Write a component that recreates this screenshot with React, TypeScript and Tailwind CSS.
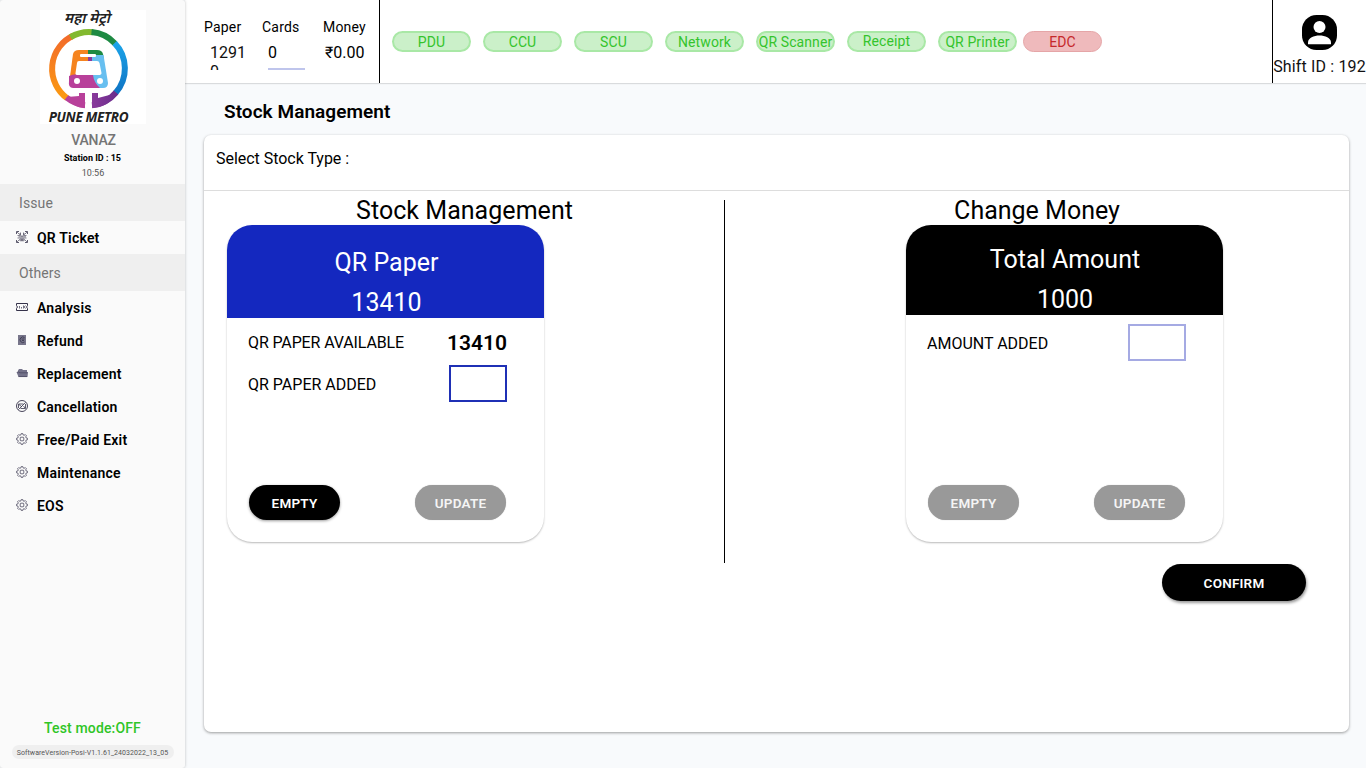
import type { ReactNode } from "react";

const ink = "#35324a";

function MetroLogo() {
  return (
    <div className="mt-[10px] ml-px flex h-[114px] w-[106px] flex-col items-center bg-white">
      <div className="h-[18px] w-[94px] self-start text-center font-['Noto_Sans_Devanagari','Noto_Sans',sans-serif] text-[14.5px] leading-[20px] font-semibold whitespace-nowrap text-[#222] italic">
        महा मेट्रो
      </div>
      <svg width="106" height="82" viewBox="40 28 106 82" className="shrink-0">
        <defs>
          <linearGradient id="org" x1="0" y1="0" x2="0" y2="1">
            <stop offset="0" stopColor="#f26b2a" />
            <stop offset="1" stopColor="#fb9a12" />
          </linearGradient>
          <linearGradient id="blu" x1="0" y1="0" x2="0" y2="1">
            <stop offset="0" stopColor="#1ba3e8" />
            <stop offset="1" stopColor="#0f74c4" />
          </linearGradient>
          <linearGradient id="prp" x1="0" y1="0" x2="1" y2="0">
            <stop offset="0" stopColor="#8a3a9c" />
            <stop offset="1" stopColor="#6a2c8c" />
          </linearGradient>
        </defs>
        <g fill="none" strokeWidth="6">
          <path d="M67 98.200A36.500 36.500 0 0 1 73 35.800" stroke="url(#org)" />
          <path d="M70.500 37.200A36.500 36.500 0 0 1 93 32.300" stroke="#82b92f" />
          <path d="M91.500 32.100A36.500 36.500 0 0 1 115 43.500" stroke="#1e8a43" />
          <path d="M114.600 43.200A36.500 36.500 0 0 1 115.500 93" stroke="url(#blu)" />
          <path d="M116 92.500A36.500 36.500 0 0 1 92 105.300" stroke="url(#prp)" />
          <path d="M66.500 97.500A36.500 36.500 0 0 0 85 105.300" stroke="#b8409a" />
        </g>
        <path d="M67 97l12-1v-3h6v15q-11-1-18-8z" fill="#b8409a" />
        <path d="M92 93h6v5l19-5q-8 14-25 15z" fill="url(#prp)" />
        <path d="M79 50h10v34H69l4-30q1-4 6-4z" fill="#f5841f" />
        <path d="M88 50h9q5 0 6 4l1 6H88z" fill="#1e8a43" />
        <path d="M92 55h11.500l4.500 28q0 5-5 5H92z" fill="#67bff0" />
        <path d="M69 76q6-3 12-1h12q1 8 7 13H73q-5 0-4-7z" fill="#b8409a" />
        <rect x="88" y="57" width="4" height="5" fill="#8a3a9c" />
        <path d="M79 61h18q2 0 2.500 2l2 10q0 2-3 2H78q-3 0-2.500-2l1.500-10q0-2 2-2z" fill="#fff" />
        <rect x="80" y="54" width="16" height="3" rx="1" fill="#fff" />
        <circle cx="77" cy="81" r="3" fill="#fff" />
        <circle cx="100" cy="81" r="3" fill="#fff" />
      </svg>
      <div className="w-[97px] self-start text-center font-['Open_Sans',sans-serif] text-[13.5px] leading-[15px] font-bold tracking-[-0.35px] whitespace-nowrap text-[#222] italic">
        PUNE METRO
      </div>
    </div>
  );
}

function QrIcon() {
  return (
    <svg width="12" height="12" viewBox="0 0 12 12" fill="none" stroke={ink} strokeWidth="0.8">
      <path d="M.5 3V.5H3M9 .5h2.500V3M.5 9v2.500H3M9 11.500h2.500V9" />
      <path
        d="M1 1l2.500 2.500M11 1L8.500 3.500M1 11l2.500-2.500M8.500 8.500L11 11M4.500 1.500v3h-3M7.500 1.500v3h3M1.500 7h3.500v3.500M10.500 7H7v3.500M2.500 5.800h7.500M6 4v6M3 3h2M7 3h2M3 9h6"
        strokeWidth="0.6"
      />
    </svg>
  );
}

function TicketIcon() {
  return (
    <svg width="12" height="12" viewBox="0 0 12 12" fill="none" stroke={ink} strokeWidth="1">
      <path d="M.5 2.500h11v2l-1 1.500 1 1.500v2H.5v-2l1-1.500-1-1.500z" />
      <path d="M3.500 5v2.500M5.500 6v1.500M7.500 4.500v3M9.500 4.500L8.200 6l1.300 1.500" strokeWidth="0.7" />
    </svg>
  );
}

function RefundIcon() {
  return (
    <svg width="12" height="12" viewBox="0 0 12 12">
      <rect x="2" y="1" width="8" height="10" fill="#77758a" />
      <path d="M8.500 3.500A2.800 2.800 0 1 0 8.500 8M5.500 5h3M6 6.500h2" fill="none" stroke={ink} strokeWidth="0.8" />
    </svg>
  );
}

function FolderIcon() {
  return (
    <svg width="12" height="12" viewBox="0 0 12 12">
      <path d="M2 5V3.500l1-1.500h3l1 1h4V5h1l-.5 5H2.500L.5 5z" fill="#74728a" />
      <path d="M1 5h2l.8.800h7.500M2.500 9.600h8.500" stroke={ink} strokeWidth="0.5" fill="none" />
    </svg>
  );
}

function CancelIcon() {
  return (
    <svg width="12" height="12" viewBox="0 0 12 12" fill="none" stroke={ink} strokeWidth="0.9">
      <circle cx="6" cy="6" r="5.500" />
      <path d="M2.500 9.500l7-7M2.500 4h5M2.500 4v4M4.500 8.500h5v-4.500M3 4.500l3 2.500M7.500 6l1.500 2" strokeWidth="0.8" />
    </svg>
  );
}

function GearIcon() {
  return (
    <svg width="12" height="12" viewBox="0 0 12 12" fill="none" stroke={ink} strokeWidth="0.7">
      <path d="M5.200.6h1.600l.3 1.300 1 .4 1.200-.7 1.100 1.100-.7 1.200.4 1 1.300.3v1.600l-1.300.3-.4 1 .7 1.200-1.100 1.100-1.200-.7-1 .4-.3 1.300H5.200l-.3-1.300-1-.4-1.200.7-1.100-1.100.7-1.200-.4-1L.6 6.800V5.200l1.300-.3.4-1-.7-1.200 1.100-1.100 1.200.7 1-.4z" />
      <rect x="4.200" y="4.200" width="3.600" height="3.600" rx="0.800" />
    </svg>
  );
}

function Section({ children }: { children: ReactNode }) {
  return (
    <div className="flex h-[37px] w-full shrink-0 items-center bg-[#efefef] pl-[19px] text-[14px] leading-[18px] tracking-[0.1px] text-[#757575]">
      {children}
    </div>
  );
}

function NavItem({ icon, label }: { icon: ReactNode; label: string }) {
  return (
    <div className="flex h-[33px] w-full shrink-0 items-center gap-[9px] pl-4">
      <span className="-mt-[1px]">{icon}</span>
      <span className="text-[14px] leading-[18px] font-semibold tracking-[0.2px] text-black">{label}</span>
    </div>
  );
}

const statuses = ["PDU", "CCU", "SCU", "Network", "QR Scanner", "Receipt", "QR Printer"];

function RoundButton({ label, active }: { label: string; active?: boolean }) {
  return (
    <button
      className={
        active
          ? "h-[35px] w-[91px] rounded-full bg-black pt-[2px] text-[13.5px] font-semibold tracking-[0.2px] text-white shadow-[0_1px_3px_rgba(0,0,0,0.4)]"
          : "h-[35px] w-[91px] rounded-full bg-[#999] pt-[2px] text-[13.5px] font-semibold tracking-[0.2px] text-[#f5f5f5] shadow-[0_0_1px_rgba(0,0,0,0.3)]"
      }
    >
      {label}
    </button>
  );
}

export default function App() {
  return (
    <div className="flex h-[768px] w-[1366px] overflow-hidden bg-[#f8fafc] font-[Roboto,sans-serif] text-black">
      <aside className="z-10 flex w-[185px] shrink-0 flex-col items-center rounded-[3px] bg-[#fafafa] shadow-[0_0_3px_rgba(0,0,0,0.25)]">
        <MetroLogo />
        <div className="mt-[7px] ml-[2px] h-[18px] text-[14px] leading-[18px] font-medium tracking-[-0.2px] text-[#757575]">VANAZ</div>
        <div className="mt-[3px] h-[12px] text-[9px] leading-[12px] font-bold">Station ID : 15</div>
        <div className="mt-[3px] mb-[5px] ml-px h-[12px] text-[9px] leading-[12px] text-[#555]">10:56</div>
        <Section>Issue</Section>
        <NavItem icon={<QrIcon />} label="QR Ticket" />
        <Section>Others</Section>
        <NavItem icon={<TicketIcon />} label="Analysis" />
        <NavItem icon={<RefundIcon />} label="Refund" />
        <NavItem icon={<FolderIcon />} label="Replacement" />
        <NavItem icon={<CancelIcon />} label="Cancellation" />
        <NavItem icon={<GearIcon />} label="Free/Paid Exit" />
        <NavItem icon={<GearIcon />} label="Maintenance" />
        <NavItem icon={<GearIcon />} label="EOS" />
        <div className="mt-auto text-[14px] leading-[18px] font-medium tracking-[0.15px] text-[#2fc527]">Test mode:OFF</div>
        <div className="mt-[8px] mb-[9px] flex h-[14px] w-[162px] items-center justify-center rounded-full bg-[#efefef] pt-[2px] text-[7px] tracking-[0.04px] whitespace-nowrap text-[#555]">
          SoftwareVersion-Posi-V1.1.61_24032022_13_05
        </div>
      </aside>

      <div className="flex min-w-0 flex-1 flex-col">
        <header className="flex h-[83px] shrink-0 bg-white pl-px shadow-[0_1px_1px_rgba(0,0,0,0.12)]">
          <div className="flex w-[194px] shrink-0 border-r border-black pt-[18px] pl-[18px]">
            <div className="w-[58px]">
              <div className="text-[14px] leading-[18px] tracking-[0.2px]">Paper</div>
              <div className="mt-[7px] h-[27px] w-[46px] overflow-hidden pl-[6px] text-[16px] leading-[19px] whitespace-nowrap text-[#111]">
                1291
                <br />0
              </div>
            </div>
            <div className="w-[61px]">
              <div className="text-[14px] leading-[18px] tracking-[0.2px]">Cards</div>
              <div className="mt-[7px] ml-[6px] h-[27px] w-[37px] border-b-2 border-[#bfc5ec] text-[16px] leading-[19px]">0</div>
            </div>
            <div>
              <div className="text-[14px] leading-[18px] tracking-[0.2px]">Money</div>
              <div className="mt-[7px] pl-[2px] text-[16px] leading-[19px]">₹0.00</div>
            </div>
          </div>
          <div className="flex flex-1 gap-3 pt-[31px] pl-3">
            {statuses.map((s) => (
              <div
                key={s}
                className="flex h-[21px] w-[79px] items-center justify-center rounded-full border-2 border-[#a9e8a6] bg-[#cbf0c9] text-[14px] leading-[17px] tracking-[0.1px] whitespace-nowrap text-[#34c42c]"
              >
                <span className={s === "Receipt" ? "-mt-px" : "mt-[2px]"}>{s}</span>
              </div>
            ))}
            <div className="-ml-[6px] flex h-[21px] w-[79px] items-center justify-center rounded-full border border-[#e5a5a7] bg-[#efbabc] pt-[2px] text-[14px] leading-[17px] text-[#c6282b]">
              EDC
            </div>
          </div>
          <div className="flex w-[94px] shrink-0 flex-col items-center border-l border-black pt-[15px]">
            <svg width="35" height="35" viewBox="0 0 35 35">
              <rect width="35" height="35" rx="14.500" fill="#000" />
              <circle cx="17.500" cy="12" r="6" fill="#fff" />
              <path d="M6 29.300v-2C6 23 12 20.500 17.500 20.500S29 23 29 27.300v2z" fill="#fff" />
            </svg>
            <div className="mt-[7px] text-[16px] leading-[19px] tracking-[0.15px] whitespace-nowrap text-[#111]">Shift ID : 192</div>
          </div>
        </header>

        <h1 className="mt-[17px] ml-[39px] h-[24px] text-[19px] leading-[24px] font-semibold tracking-[0.05px]">Stock Management</h1>

        <main className="mt-[11px] ml-[19px] flex h-[597px] w-[1145px] flex-col rounded-[7px] bg-white shadow-[0_1px_3px_rgba(0,0,0,0.38)]">
          <div className="h-[56px] shrink-0 border-b border-[#ddd] pt-[14px] pl-[12px] text-[16px] leading-[20px] tracking-[-0.03px]">
            Select Stock Type :
          </div>
          <div className="flex">
            <section className="mt-[9px] h-[363px] w-[521px] border-r border-black">
              <h2 className="h-[25px] pl-px text-center text-[25px] leading-[21px] tracking-[0.04px]">Stock Management</h2>
              <div className="ml-[23px] flex h-[317px] w-[317px] flex-col overflow-hidden rounded-[25px] bg-white shadow-[0_1px_2px_rgba(0,0,0,0.28)]">
                <div className="h-[93px] shrink-0 bg-[#1428bf] pt-[18px] pl-[2px] text-center text-[25px] leading-[40px] text-white">
                  <div>QR Paper</div>
                  <div>13410</div>
                </div>
                <div className="flex h-[49px] items-center justify-between pt-px pr-[37px] pl-[21px]">
                  <span className="text-[16px] tracking-[-0.13px]">QR PAPER AVAILABLE</span>
                  <span className="pt-[2px] text-[21px] font-semibold">13410</span>
                </div>
                <div className="flex h-[33px] items-center justify-between pr-[37px] pl-[21px]">
                  <span className="pt-[2px] text-[16px]">QR PAPER ADDED</span>
                  <div className="h-[37px] w-[58px] border-2 border-[#1f30b5]" />
                </div>
                <div className="mt-auto mb-[22px] flex justify-between pr-[38px] pl-[22px]">
                  <RoundButton label="EMPTY" active />
                  <RoundButton label="UPDATE" />
                </div>
              </div>
            </section>
            <section className="mt-[9px] flex-1">
              <h2 className="h-[25px] text-center text-[25px] leading-[21px]">Change Money</h2>
              <div className="ml-[181px] flex h-[317px] w-[317px] flex-col overflow-hidden rounded-[25px] bg-white shadow-[0_1px_2px_rgba(0,0,0,0.28)]">
                <div className="h-[90px] shrink-0 bg-black pt-[15px] pl-px text-center text-[25px] leading-[40px] text-white">
                  <div>Total Amount</div>
                  <div>1000</div>
                </div>
                <div className="flex h-[55px] items-center justify-between pr-[37px] pl-[21px]">
                  <span className="pt-[2px] text-[16px]">AMOUNT ADDED</span>
                  <div className="h-[37px] w-[58px] border-2 border-[#a5aae3]" />
                </div>
                <div className="mt-auto mb-[22px] flex justify-between pr-[38px] pl-[22px]">
                  <RoundButton label="EMPTY" />
                  <RoundButton label="UPDATE" />
                </div>
              </div>
            </section>
          </div>
          <button className="mt-px mr-[43px] h-[37px] w-[144px] self-end rounded-full bg-black pt-[2px] text-[13.5px] font-semibold tracking-[0.2px] text-white shadow-[1px_2px_3px_rgba(0,0,0,0.4)]">
            CONFIRM
          </button>
        </main>
      </div>
    </div>
  );
}
